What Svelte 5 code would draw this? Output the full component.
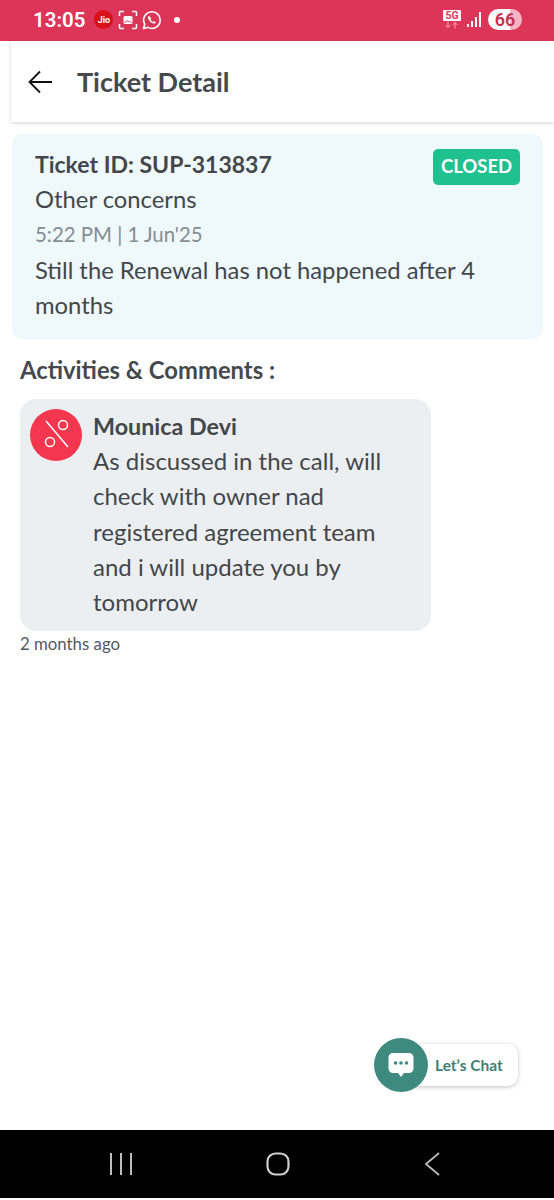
<script>
  const bodyLines = ['As discussed in the call, will', 'check with owner nad', 'registered agreement team', 'and i will update you by', 'tomorrow'];
</script>

<div class="screen">
  <div class="status">
    <span class="time">13:05</span>
    <span class="jio">Jio</span>
    <svg class="ic" width="20" height="20" viewBox="0 0 20 20" fill="none" stroke="#fff" stroke-width="1.5">
      <path d="M1.5 6V2.5a1 1 0 0 1 1-1H6M14 1.500h3.500a1 1 0 0 1 1 1V6M18.500 14v3.500a1 1 0 0 1-1 1H14M6 18.500H2.500a1 1 0 0 1-1-1V14" />
      <rect x="5.500" y="6" width="9" height="8" rx="1.500" fill="#fff" stroke="none" />
      <path d="M6.500 13l2.500-2.500 1.500 1.500 1-1 2 2" stroke="#df3659" stroke-width="1" />
    </svg>
    <svg class="ic" width="20" height="20" viewBox="0 0 20 20" fill="none" stroke="#fff" stroke-width="1.600">
      <path d="M1.500 18.500l1.200-4.300A8.300 8.300 0 1 1 6 17.400z" stroke-linejoin="round" />
      <path d="M7 5.800c-.8.500-1.200 1.500-.8 2.800.7 2.200 2.800 4.300 5 4.900 1.200.3 2.200-.2 2.700-1l-1.900-1.400-1 .8c-1-.4-2-1.400-2.500-2.500l.8-1z" fill="#fff" stroke="none" />
    </svg>
    <span class="dot"></span>
    <span class="grow"></span>
    <span class="net"><b>5G</b><svg width="16" height="8" viewBox="0 0 16 7" fill="none" stroke="#f4a9b8" stroke-width="1"><path d="M4 0v6M1.500 3.500L4 6l2.500-2.500M11 7V1M8.500 3.500L11 1l2.500 2.500" /></svg></span>
    <svg class="sig" width="15" height="16" viewBox="0 0 15 16" fill="#fff">
      <rect x="0" y="12" width="2" height="3" opacity=".9" /><rect x="4" y="9" width="2" height="6" /><rect x="8" y="5" width="2" height="10" /><rect x="12" y="0" width="2" height="15" />
    </svg>
    <span class="batt">66</span>
  </div>

  <header class="bar">
    <svg width="24" height="24" viewBox="0 0 24 24" fill="none" stroke="#111" stroke-width="1.800">
      <path d="M24 12H2M12 1.500L1.500 12 12 22.500" />
    </svg>
    <h1>Ticket Detail</h1>
  </header>

  <section class="ticket">
    <div class="top">
      <div class="tid">Ticket ID: SUP-313837</div>
      <span class="badge">CLOSED</span>
    </div>
    <div class="line">Other concerns</div>
    <div class="line when">5:22 PM | 1 Jun'25</div>
    <div class="line">Still the Renewal has not happened after 4<br />months</div>
  </section>

  <h2>Activities &amp; Comments :</h2>

  <div class="bubble">
    <div class="avatar">
      <svg width="36" height="36" viewBox="0 0 36 36" fill="none" stroke="#fff" stroke-width="1.500">
        <path d="M8 4l22 26" />
        <circle cx="25" cy="8" r="4.500" />
        <circle cx="12" cy="25" r="4.500" />
      </svg>
    </div>
    <div class="msg">
      <div class="who">Mounica Devi</div>
      {#each bodyLines as l}
        <div class="line">{l}</div>
      {/each}
    </div>
  </div>
  <div class="ago">2 months ago</div>

  <nav class="nav">
    <svg width="22" height="22" viewBox="0 0 22 22" stroke="#bdbdbd" stroke-width="2"><path d="M1 0v22M11 0v22M21 0v22" /></svg>
    <svg width="24" height="24" viewBox="0 0 24 24" fill="none" stroke="#cfcfcf" stroke-width="2.200"><rect x="1.500" y="1.500" width="21" height="21" rx="8" /></svg>
    <svg width="16" height="24" viewBox="0 0 16 24" fill="none" stroke="#bdbdbd" stroke-width="1.800"><path d="M15 1L2 12l13 11" /></svg>
  </nav>

  <button class="chat">
    <span class="round">
      <svg width="28" height="28" viewBox="0 0 28 28">
        <path d="M6 2h16a4.500 4.500 0 0 1 4.500 4.500v11A4.500 4.500 0 0 1 22 22h-5l-3 4-3-4H6a4.500 4.500 0 0 1-4.500-4.500v-11A4.500 4.500 0 0 1 6 2z" fill="#fff" />
        <circle cx="8.500" cy="12" r="1.800" fill="#3f8a7e" /><circle cx="14" cy="12" r="1.800" fill="#3f8a7e" /><circle cx="19.500" cy="12" r="1.800" fill="#3f8a7e" />
      </svg>
    </span>
    <span class="lbl">Let’s Chat</span>
  </button>
</div>

<style>
  :global(body) {
    margin: 0;
    background: #fff;
  }
  .screen {
    position: relative;
    width: 554px;
    height: 1200px;
    display: flex;
    flex-direction: column;
    overflow: hidden;
    font-family: Lato, "Noto Sans", sans-serif;
    color: #43474a;
    background: #fff;
  }
  .status {
    height: 41px;
    flex: none;
    background: #dd3558;
    display: flex;
    align-items: center;
    padding: 0 32px 2px 33px;
    color: #fff;
    box-sizing: border-box;
  }
  .time {
    font: 600 20.500px Roboto, sans-serif;
    margin-right: 9px;
  }
  .jio {
    width: 19px;
    height: 19px;
    border-radius: 50%;
    background: #d8101c;
    font: 700 9px Roboto, sans-serif;
    display: flex;
    align-items: center;
    justify-content: center;
    margin-right: 5px;
  }
  .ic {
    margin-right: 4px;
  }
  .dot {
    width: 6px;
    height: 6px;
    border-radius: 50%;
    background: #fff;
    margin-left: 8px;
  }
  .grow {
    flex: 1;
  }
  .net {
    display: flex;
    flex-direction: column;
    align-items: center;
    width: 18px;
    margin-right: 6px;
  }
  .net b {
    width: 18px;
    background: #fff;
    color: #df3659;
    font: 700 10.500px/11px Roboto, sans-serif;
    text-align: center;
    border-radius: 1px;
  }
  .sig {
    margin-right: 6px;
  }
  .batt {
    width: 34px;
    height: 21px;
    border-radius: 11px;
    background: linear-gradient(90deg, #fff 66%, #f3b6c2 66%);
    color: #c9304f;
    font: 600 18px/21px Roboto, sans-serif;
    text-align: center;
  }
  .bar {
    flex: none;
    height: 81px;
    margin-left: 11px;
    display: flex;
    align-items: center;
    gap: 25px;
    padding-left: 17px;
    background: #fff;
    box-shadow: 0 1px 4px rgba(0, 0, 0, 0.18);
  }
  h1 {
    margin: -1px 0 0;
    font-size: 27px;
    font-weight: 700;
    color: #46494b;
  }
  .ticket {
    flex: none;
    margin: 12px 11px 0 12px;
    height: 205px;
    box-sizing: border-box;
    padding: 13px 23px 0;
    border-radius: 10px;
    background: #eff8fb;
    font-size: 23.800px;
  }
  .top {
    display: flex;
    justify-content: space-between;
    align-items: flex-start;
    height: 35px;
  }
  .tid {
    font-size: 23px;
    font-weight: 700;
    line-height: 35px;
  }
  .badge {
    margin-top: 2px;
    height: 36px;
    width: 87px;
    border-radius: 5px;
    background: #1fc28f;
    color: #fff;
    font-size: 18.500px;
    font-weight: 700;
    line-height: 35px;
    text-align: center;
  }
  .line {
    line-height: 35.300px;
  }
  .when {
    color: #858d92;
    font-size: 20.400px;
  }
  h2 {
    margin: 15px 0 0 20px;
    font-size: 23.800px;
    line-height: 33px;
    font-weight: 700;
    color: #46494b;
  }
  .bubble {
    flex: none;
    margin: 12px 0 0 20px;
    width: 411px;
    height: 232px;
    box-sizing: border-box;
    padding: 10px 10px 0;
    display: flex;
    gap: 11px;
    border-radius: 16px;
    background: #eceff1;
    font-size: 24px;
  }
  .avatar {
    flex: none;
    width: 52px;
    height: 52px;
    border-radius: 50%;
    background: #f5364f;
    display: flex;
    align-items: center;
    justify-content: center;
  }
  .who {
    font-size: 23.300px;
    font-weight: 700;
    line-height: 34px;
  }
  .ago {
    margin: 1px 0 0 20px;
    font-size: 16.800px;
    line-height: 24px;
    color: #55595c;
  }
  .nav {
    margin-top: auto;
    margin-bottom: 2px;
    height: 68px;
    flex: none;
    background: #000;
    display: flex;
    align-items: center;
    padding: 0 114px 0 110px;
    justify-content: space-between;
  }
  .chat {
    position: absolute;
    left: 374px;
    top: 1038px;
    width: 144px;
    height: 54px;
    padding: 0;
    border: 0;
    background: none;
    font: inherit;
  }
  .lbl {
    position: absolute;
    left: 14px;
    top: 6px;
    width: 130px;
    height: 42px;
    box-sizing: border-box;
    padding-left: 47px;
    border-radius: 10px;
    background: #fff;
    box-shadow: 0 1px 4px rgba(0, 0, 0, 0.25);
    color: #3f7f75;
    font-size: 15.500px;
    font-weight: 700;
    line-height: 42px;
    text-align: left;
  }
  .round {
    position: absolute;
    z-index: 1;
    left: 0;
    top: 0;
    width: 54px;
    height: 54px;
    border-radius: 50%;
    background: #3f8a7e;
    display: flex;
    align-items: center;
    justify-content: center;
  }
</style>
